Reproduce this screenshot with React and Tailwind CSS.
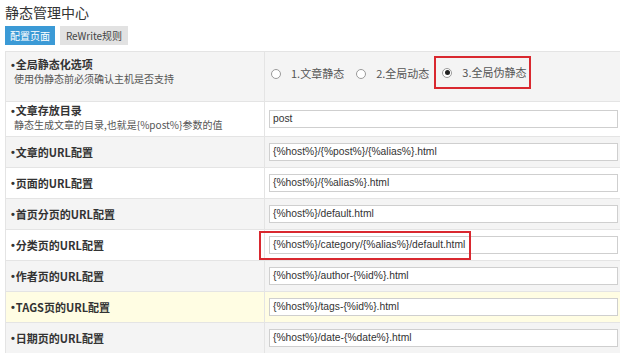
const rows = [
  { label: "文章的URL配置", value: "{%host%}/{%post%}/{%alias%}.html" },
  { label: "页面的URL配置", value: "{%host%}/{%alias%}.html" },
  { label: "首页分页的URL配置", value: "{%host%}/default.html" },
  { label: "分类页的URL配置", value: "{%host%}/category/{%alias%}/default.html", mark: true },
  { label: "作者页的URL配置", value: "{%host%}/author-{%id%}.html" },
  { label: "TAGS页的URL配置", value: "{%host%}/tags-{%id%}.html", hover: true },
  { label: "日期页的URL配置", value: "{%host%}/date-{%date%}.html" },
];

function Dot() {
  return <span className="font-['Liberation_Sans',sans-serif] font-bold mr-[1px]">•</span>;
}

function Radio({ checked }) {
  return (
    <span className="w-[10px] h-[10px] rounded-full border border-[#9a9a9a] bg-white flex items-center justify-center">
      {checked && <span className="w-[5px] h-[5px] rounded-full bg-[#222]" />}
    </span>
  );
}

function Input({ value }) {
  return (
    <div className="h-[18px] border border-[#cfcfcf] bg-white px-[3px] flex items-center text-[10.3px] text-[#333] font-['Liberation_Sans',sans-serif] whitespace-nowrap">
      {value}
    </div>
  );
}

export default function App() {
  const font = "font-['Noto_Sans_CJK_SC','Liberation_Sans',sans-serif]";
  return (
    <div className={`w-[620px] h-[353px] overflow-hidden bg-white pl-[5px] ${font}`}>
      {/* TITLE */}
      <div className="h-[26px] pt-[4px] text-[14px] leading-[16px] text-[#333]">静态管理中心</div>

      {/* TABS */}
      <div className="flex gap-[5px] h-[19px]">
        <div className="w-[50px] bg-[#3b9ad6] text-white text-[10px] flex items-center justify-center">配置页面</div>
        <div className="w-[68px] bg-[#e2e2e2] text-[#444] text-[10px] flex items-center justify-center">ReWrite规则</div>
      </div>

      {/* TABLE */}
      <div className="mt-[6px] border-l border-t border-[#e4e4e4] w-[620px]">
        <div className="flex h-[50px] bg-[#f4f4f4] border-b border-[#e4e4e4]">
          <div className="w-[259px] border-r border-[#e4e4e4] pl-[5px] pt-[5px] flex flex-col">
            <div className="text-[11px] leading-[14px] font-bold text-[#333]">
              <Dot />全局静态化选项
            </div>
            <div className="text-[10px] leading-[14px] text-[#555] pl-[3px]">使用伪静态前必须确认主机是否支持</div>
          </div>
          <div className="flex-1 flex items-center pl-[6px] text-[11px] text-[#555]">
            <div className="flex items-center gap-[10px] mb-[6px]">
              <Radio />
              <span>1.文章静态</span>
            </div>
            <div className="flex items-center gap-[10px] ml-[12px] mb-[6px]">
              <Radio />
              <span>2.全局动态</span>
            </div>
            <div className="flex items-center gap-[7px] ml-[5px] mb-[8px] h-[33px] w-[97px] border-2 border-[#d9282f] pl-[6px]">
              <Radio checked />
              <span className="ml-[3px]">3.全局伪静态</span>
            </div>
          </div>
        </div>

        <div className="flex h-[35px] bg-white border-b border-[#e4e4e4]">
          <div className="w-[259px] border-r border-[#e4e4e4] pl-[5px] pt-[2px] flex flex-col">
            <div className="text-[11px] leading-[13px] font-bold text-[#333]">
              <Dot />文章存放目录
            </div>
            <div className="text-[10px] leading-[14px] text-[#555] pl-[3px]">静态生成文章的目录,也就是{"{%post%}"}参数的值</div>
          </div>
          <div className="flex-1 flex items-center pl-[4px] pr-[7px]">
            <div className="w-full">
              <Input value="post" />
            </div>
          </div>
        </div>

        {rows.map((r, i) => (
          <div
            key={r.label}
            className={`flex h-[31px] border-b border-[#e4e4e4] ${
              r.hover ? "bg-[#fffde3]" : i % 2 === 0 ? "bg-[#f4f4f4]" : "bg-white"
            }`}
          >
            <div className="w-[259px] border-r border-[#e4e4e4] pl-[5px] flex items-center text-[11px] font-bold text-[#333]">
              <Dot />
              {r.label}
            </div>
            <div className="relative flex-1 flex items-center pl-[4px] pr-[7px]">
              <div className="w-full">
                <Input value={r.value} />
              </div>
              {r.mark && (
                <div className="absolute left-[-6px] top-[1px] w-[212px] h-[29px] border-2 border-[#d9282f]" />
              )}
            </div>
          </div>
        ))}
      </div>
    </div>
  );
}
